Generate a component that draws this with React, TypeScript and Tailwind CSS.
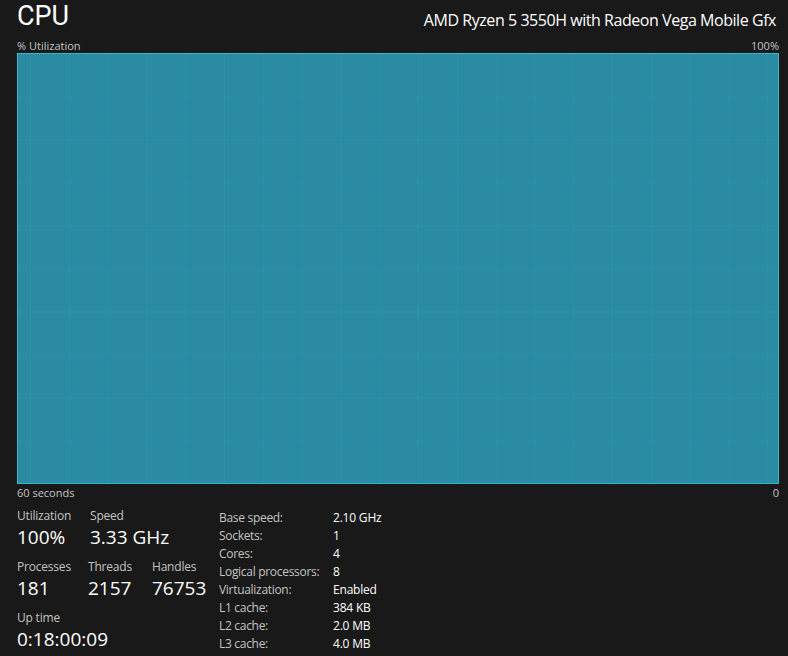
import React from 'react'

const font = { fontFamily: '"Open Sans", "Noto Sans", sans-serif' }

const details: [string, string][] = [
  ['Base speed:', '2.10 GHz'],
  ['Sockets:', '1'],
  ['Cores:', '4'],
  ['Logical processors:', '8'],
  ['Virtualization:', 'Enabled'],
  ['L1 cache:', '384 KB'],
  ['L2 cache:', '2.0 MB'],
  ['L3 cache:', '4.0 MB'],
]

function Stat({ label, value, width }: { label: string; value: string; width: string }) {
  return (
    <div className={`${width} flex flex-col`}>
      <span className="text-[12px] leading-[16px] tracking-[-0.2px] text-[#c4c4c4]">{label}</span>
      <span className="text-[19px] leading-[26px] text-white">{value}</span>
    </div>
  )
}

function Chart() {
  const cols = Array.from({ length: 20 }, (_, i) => 12.5 + i * 38.8)
  const rows = Array.from({ length: 9 }, (_, i) => 43 + i * 43)
  return (
    <div className="h-[431px] w-full border border-[#33b4cf] bg-[#2a8ba3]">
      <svg width="100%" height="100%" className="block">
        {cols.map((x) => (
          <line key={x} x1={x} y1={0} x2={x} y2={431} stroke="#2d91a9" strokeWidth={1} />
        ))}
        {rows.map((y) => (
          <line key={y} x1={0} y1={y} x2={762} y2={y} stroke="#2d91a9" strokeWidth={1} />
        ))}
      </svg>
    </div>
  )
}

export default function App() {
  return (
    <div className="w-[788px] h-[656px] overflow-hidden bg-[#191919] pl-[17px] pr-[9px] text-white" style={font}>
      <div className="flex items-start justify-between pr-[3px] h-[38px]">
        <span className="font-['Roboto',sans-serif] text-[27px] leading-[32px] text-white">CPU</span>
        <span className="mt-[9px] text-[16px] leading-[22px] tracking-[-0.45px] text-white">
          AMD Ryzen 5 3550H with Radeon Vega Mobile Gfx
        </span>
      </div>
      <div className="flex justify-between text-[11px] leading-[15px] text-[#c4c4c4]">
        <span>% Utilization</span>
        <span>100%</span>
      </div>
      <Chart />
      <div className="flex justify-between text-[11px] leading-[18px] text-[#c4c4c4]">
        <span>60 seconds</span>
        <span>0</span>
      </div>
      <div className="flex mt-[6px]">
        <div className="w-[202px] flex flex-col gap-[9px]">
          <div className="flex">
            <Stat label="Utilization" value="100%" width="w-[73px]" />
            <Stat label="Speed" value="3.33 GHz" width="w-[100px]" />
          </div>
          <div className="flex">
            <Stat label="Processes" value="181" width="w-[71px]" />
            <Stat label="Threads" value="2157" width="w-[64px]" />
            <Stat label="Handles" value="76753" width="w-[60px]" />
          </div>
          <div className="flex">
            <Stat label="Up time" value="0:18:00:09" width="w-[120px]" />
          </div>
        </div>
        <div className="flex flex-col pt-[1px]">
          {details.map(([k, v]) => (
            <div key={k} className="flex text-[12px] leading-[18px]">
              <span className="w-[114px] tracking-[-0.3px] text-[#c4c4c4]">{k}</span>
              <span className="tracking-[-0.2px] text-white">{v}</span>
            </div>
          ))}
        </div>
      </div>
    </div>
  )
}
